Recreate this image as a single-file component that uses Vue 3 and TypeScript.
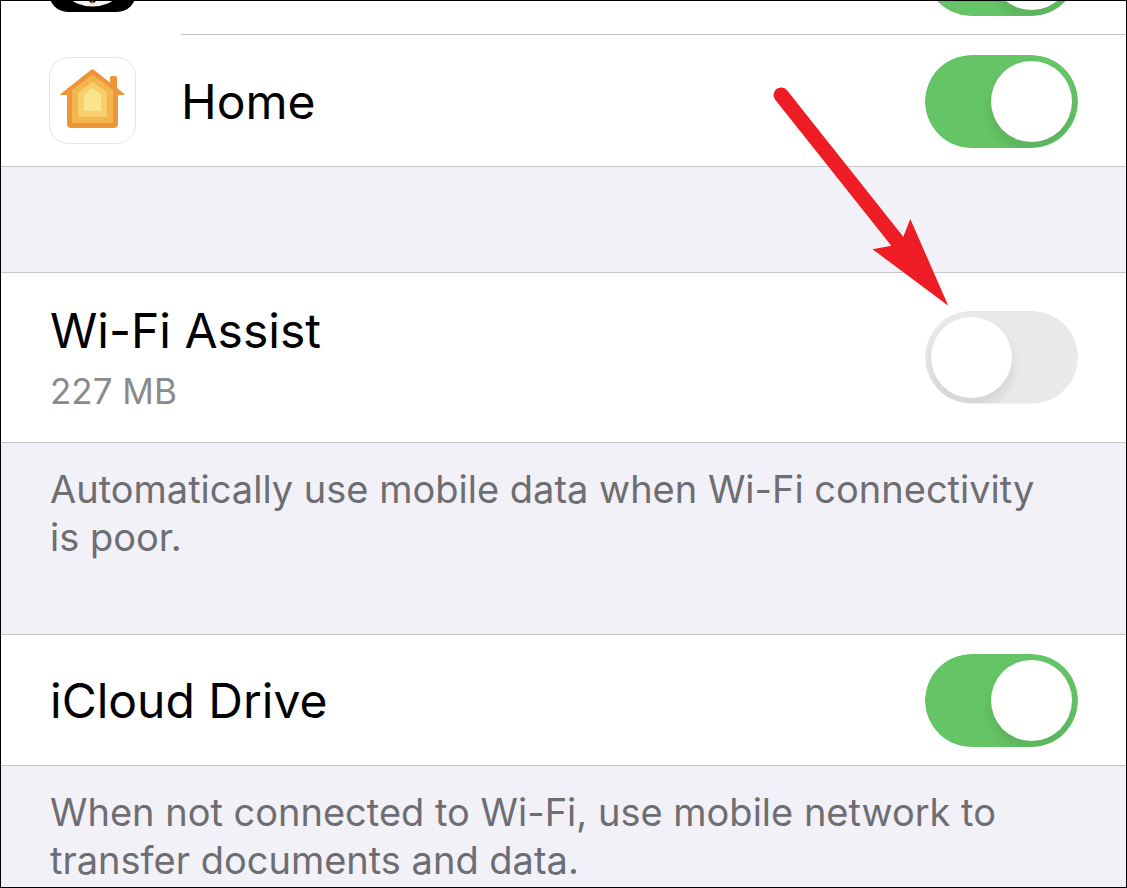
<script setup lang="ts">
import { reactive } from 'vue'

interface Row {
  id: string
  label: string
  on: boolean
}

interface Section extends Row {
  detail?: string
  footer: string
}

const apps = reactive<Row[]>([
  { id: 'penguin', label: '', on: true },
  { id: 'home', label: 'Home', on: true },
])

const sections = reactive<Section[]>([
  {
    id: 'wifi-assist',
    label: 'Wi-Fi Assist',
    detail: '227 MB',
    on: false,
    footer: 'Automatically use mobile data when Wi-Fi connectivity is poor.',
  },
  {
    id: 'icloud-drive',
    label: 'iCloud Drive',
    on: true,
    footer: 'When not connected to Wi-Fi, use mobile network to transfer documents and data.',
  },
])
</script>

<template>
  <main class="screen">
    <div class="scroller">
      <ul class="apps">
        <li v-for="app in apps" :key="app.id" class="app">
          <svg v-if="app.id === 'home'" class="icon" viewBox="0 0 87 87" aria-hidden="true">
            <rect x="0.5" y="0.5" width="86" height="86" rx="19" fill="#fff" stroke="#e5e5ea" />
            <path
              d="M42.500 12.600Q43.500 11.700 44.500 12.600L61 25.500V20.500Q61 19 62.500 19H66.500Q68 19 68 20.500V31L75.500 37Q76 38 75 38H69V67q0 4-4 4H22q-4 0-4-4V38H12Q11 38 11.500 37Z"
              fill="#ed9639"
            />
            <path d="M43.500 17.700 64 33V65q0 1-1 1H24q-1 0-1-1V33Z" fill="#f4b54d" />
            <path d="M43.500 24.700 58 35.500V59q0 1-1 1H30q-1 0-1-1V35.500Z" fill="#f8cf6c" />
            <path d="M42.500 31.500H44.500L52 37.500V54H35V37.500Z" fill="#fae58e" />
          </svg>
          <svg v-else class="icon" viewBox="0 0 87 87" aria-hidden="true">
            <rect width="87" height="87" rx="19" fill="#000" />
            <ellipse cx="43.500" cy="44.500" rx="38" ry="37" fill="#f4f3f8" />
            <path d="M40 74h7v2l-2 2h-3l-2-2Z" fill="#111" />
            <path d="M42.200 76.500h2.600L43.500 79.500Z" fill="#ed9639" />
          </svg>
          <div class="cell">
            <label class="title" :for="app.id">{{ app.label }}</label>
            <input :id="app.id" v-model="app.on" class="switch" type="checkbox" role="switch" />
          </div>
        </li>
      </ul>

      <section v-for="section in sections" :key="section.id" class="section">
        <div class="row">
          <div class="text">
            <label class="title" :for="section.id">{{ section.label }}</label>
            <span v-if="section.detail" class="detail">{{ section.detail }}</span>
          </div>
          <input :id="section.id" v-model="section.on" class="switch" type="checkbox" role="switch" />
        </div>
        <p class="footer">{{ section.footer }}</p>
      </section>

      <svg class="arrow" viewBox="0 0 180 222" aria-hidden="true">
        <path
          d="M4.200 14.700A7.500 7.500 0 0 1 16 5.300L132.300 151.700 139.300 134 177.300 220.700 101.500 164.200 120.300 160.700Z"
          fill="#ee1c25"
        />
      </svg>
    </div>
  </main>
</template>

<style>
body {
  margin: 0;
}
</style>

<style scoped>
.screen {
  box-sizing: border-box;
  height: 100vh;
  overflow: hidden;
  border: 1px solid #000;
  background: #f2f1f7;
  color: #000;
  font-family: Inter, "Liberation Sans", sans-serif;
}

/* The list is scrolled so that its first row is only partly in view. */
.scroller {
  position: relative;
  margin-top: -98px;
}

.apps {
  margin: 0;
  padding: 0;
  list-style: none;
  background: #fff;
  border-bottom: 1px solid #c6c6c8;
}

.app {
  display: flex;
  align-items: flex-start;
  padding-left: 48px;
}

.icon {
  flex: none;
  width: 87px;
  height: 87px;
  margin: 22px 45px 0 0;
}

.cell {
  flex: 1;
  display: flex;
  align-items: center;
  justify-content: space-between;
  padding: 20px 48px 18px 0;
}

.app:not(:last-child) .cell {
  border-bottom: 1px solid #c6c6c8;
}

.section {
  margin-top: 105px;
}

.section + .section {
  margin-top: 73px;
}

.row {
  display: flex;
  align-items: center;
  justify-content: space-between;
  padding: 19px 48px 18px 49px;
  background: #fff;
  border-top: 1px solid #c6c6c8;
  border-bottom: 1px solid #c6c6c8;
}

.text {
  display: flex;
  flex-direction: column;
}

.row:has(.detail) {
  padding-top: 24px;
  padding-bottom: 25px;
}

.title {
  font-size: 48px;
  line-height: 68px;
}

.detail {
  color: #8a8a8e;
  font-size: 35px;
  line-height: 52px;
}

.footer {
  margin: 0;
  padding: 22px 64px 0 49px;
  color: #6d6d72;
  font-size: 38px;
  line-height: 48px;
}

.switch {
  appearance: none;
  flex: none;
  width: 153px;
  height: 93px;
  margin: 0;
  padding: 6px;
  box-sizing: border-box;
  border-radius: 47px;
  clip-path: inset(0 round 47px);
  background: #e9e9eb;
  cursor: pointer;
}

.switch::before {
  content: "";
  display: block;
  width: 81px;
  height: 81px;
  border-radius: 50%;
  background: #fff;
  box-shadow: 0 8px 10px 2px rgba(0, 0, 0, 0.08);
}

.switch:checked {
  background: #65c466;
}

.switch:checked::before {
  margin-left: auto;
}

.arrow {
  position: absolute;
  top: 182px;
  right: 175px;
  width: 180px;
  height: 222px;
  pointer-events: none;
}
</style>
